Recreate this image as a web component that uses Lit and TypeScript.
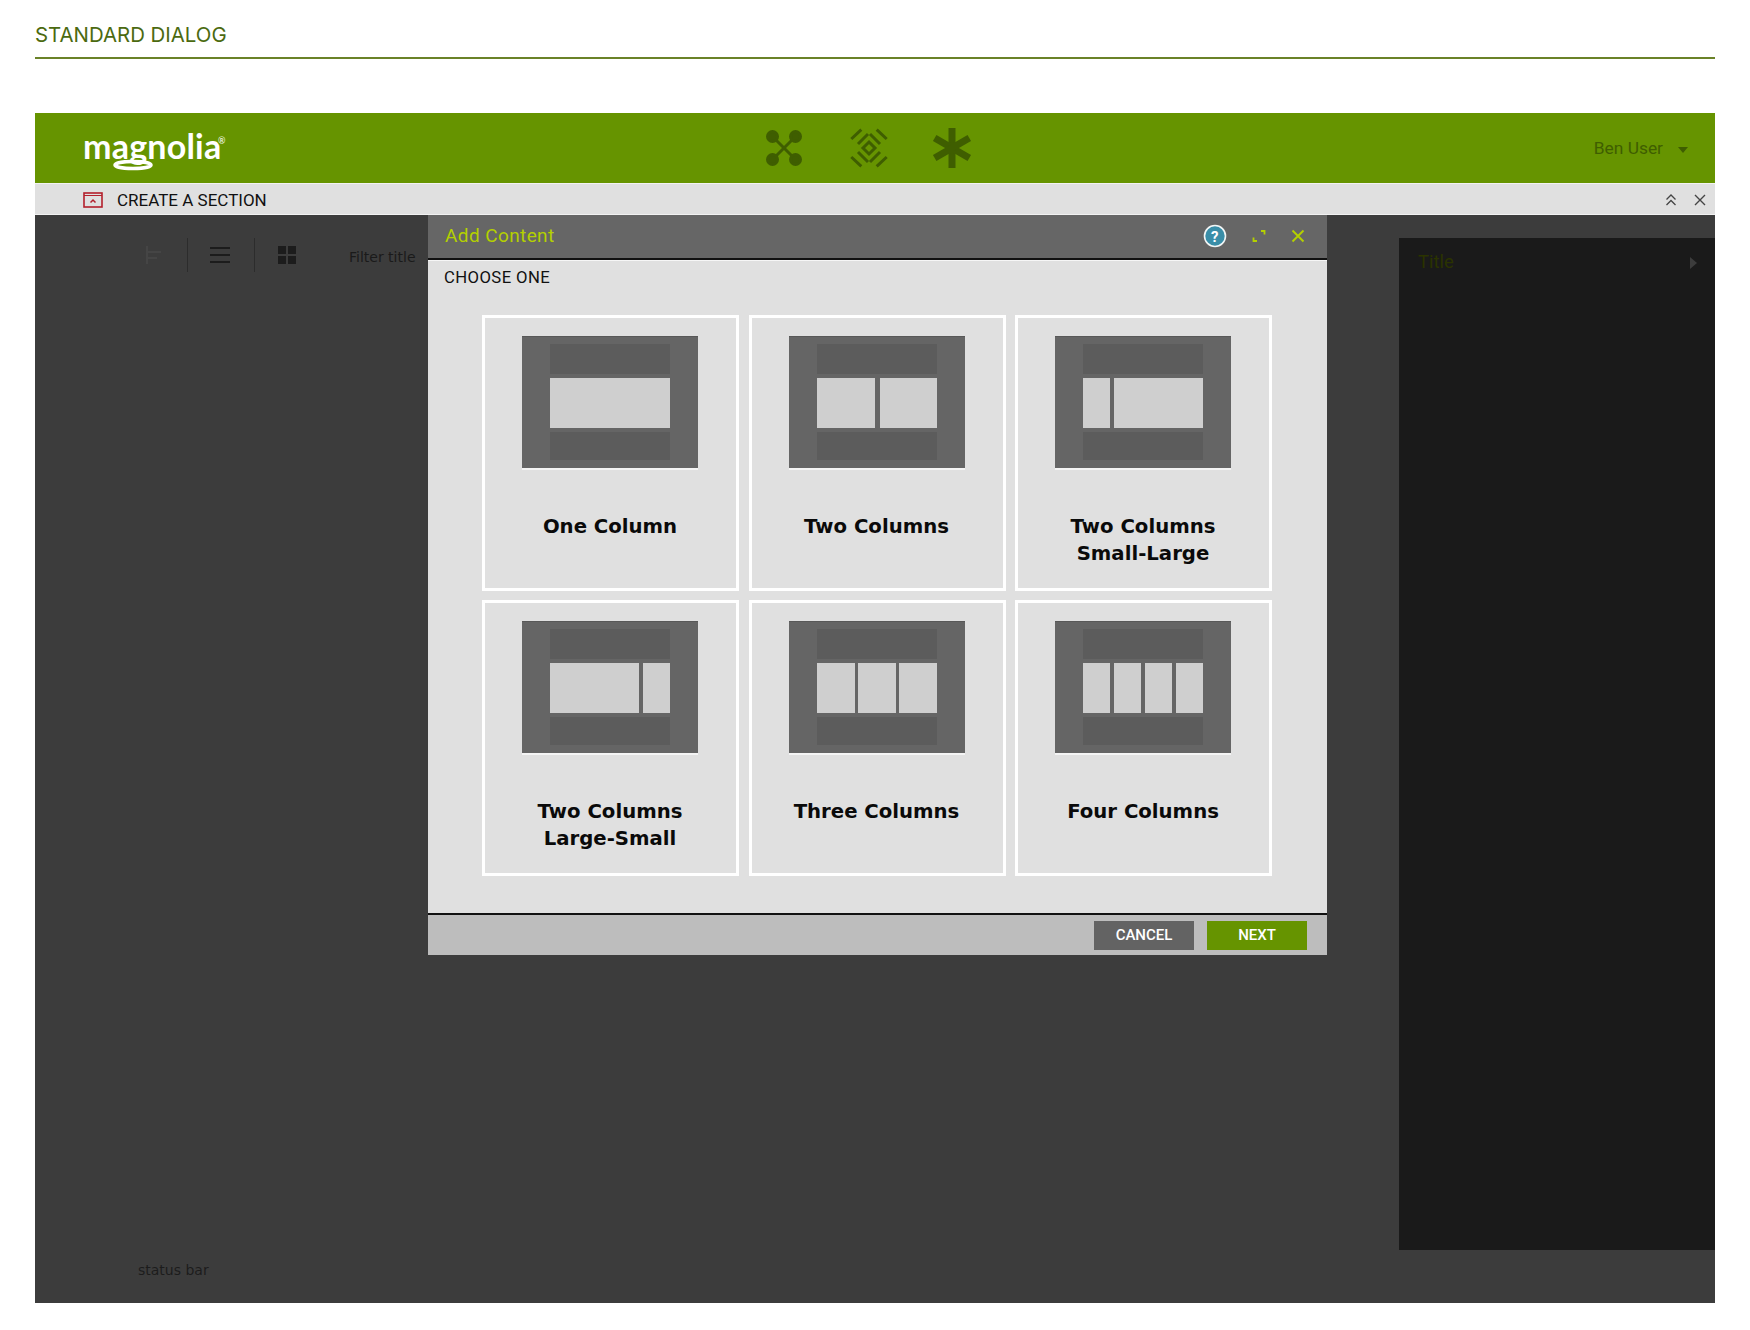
import { LitElement, html, css, svg } from 'lit';
import { customElement } from 'lit/decorators.js';

interface Layout {
  label: string[];
  blocks: number[];
}

const LAYOUTS: Layout[] = [
  { label: ['One Column'], blocks: [120] },
  { label: ['Two Columns'], blocks: [58, 57] },
  { label: ['Two Columns', 'Small-Large'], blocks: [27, 89] },
  { label: ['Two Columns', 'Large-Small'], blocks: [89, 27] },
  { label: ['Three Columns'], blocks: [38, 38, 38] },
  { label: ['Four Columns'], blocks: [27, 27, 27, 27] },
];

const appsIcon = svg`
  <g fill="#3f5e00" stroke="#3f5e00" stroke-width="3">
    <line x1="6.5" y1="6.5" x2="29.5" y2="29.5" />
    <line x1="29.5" y1="6.5" x2="6.5" y2="29.5" />
    <circle cx="6.5" cy="6.5" r="5" />
    <circle cx="29.5" cy="6.5" r="5" />
    <circle cx="6.5" cy="29.5" r="5" />
    <circle cx="29.5" cy="29.5" r="5" />
  </g>`;

const pulseIcon = svg`
  <g fill="none" stroke="#3f5e00" stroke-width="3">
    <path d="M18 12 24 18 18 24 12 18Z" />
    <path d="M.3 9 10.300 -.3M7 14 17 4M35.700 9 25.700 -.3M29 14 19 4" />
    <path d="M.3 27 10.300 36.300M7 22 17 32M35.700 27 25.700 36.300M29 22 19 32" />
  </g>`;

const asteriskIcon = svg`
  <g stroke="#3f5e00" stroke-width="7">
    <line x1="20" y1="0" x2="20" y2="40" />
    <line x1="2.7" y1="10" x2="37.3" y2="30" />
    <line x1="2.7" y1="30" x2="37.3" y2="10" />
  </g>`;

@customElement('app-root')
export class AppRoot extends LitElement {
  static styles = css`
    :host {
      display: block;
      width: 1750px;
      height: 1330px;
      background: #fff;
      font-family: Roboto, 'Liberation Sans', sans-serif;
      overflow: hidden;
    }

    * {
      box-sizing: border-box;
    }

    svg {
      display: block;
    }

    .pulse {
      overflow: visible;
    }

    .page {
      padding: 0 35px;
    }

    .page-title {
      height: 59px;
      padding-top: 22px;
      border-bottom: 2px solid #6a8228;
      color: #4b6a10;
      font-family: Inter, sans-serif;
      font-size: 20.4px;
      line-height: 26px;
    }

    .frame {
      margin-top: 54px;
      height: 1190px;
      display: flex;
      flex-direction: column;
    }

    .topbar {
      height: 70px;
      background: #669400;
      display: grid;
      grid-template-columns: 1fr auto 1fr;
      align-items: center;
    }

    .logo {
      position: relative;
      margin-left: 48px;
      width: 150px;
      height: 50px;
      color: #fff;
      font-family: Lato, sans-serif;
      font-weight: 700;
      font-size: 34px;
      line-height: 46px;
      letter-spacing: 0.2px;
    }

    .logo sup {
      position: absolute;
      left: 135px;
      top: 13px;
      color: #dfe8c8;
      font-size: 9px;
      line-height: 9px;
    }

    .logo svg {
      position: absolute;
      left: 30px;
      top: 34px;
    }

    .apps {
      display: flex;
      align-items: center;
      margin-right: 12px;
    }

    .apps svg + svg {
      margin-left: 49px;
    }

    .apps svg.star {
      margin-left: 45px;
    }

    .user {
      justify-self: end;
      display: flex;
      align-items: center;
      margin-right: 27px;
      color: #3f5e00;
      font-size: 17.4px;
    }

    .caret {
      margin-left: 15px;
      margin-top: 3px;
      width: 0;
      height: 0;
      border: 5px solid transparent;
      border-top: 6px solid #3f5e00;
      border-bottom: 0;
    }

    .subbar {
      height: 32px;
      background: #e0e0e0;
      border-top: 1px solid #f2f2f2;
      border-bottom: 1px solid #f2f2f2;
      display: flex;
      align-items: center;
      padding: 2px 9px 0 48px;
      color: #111;
      font-size: 17px;
    }

    .subbar-title {
      margin-left: 14px;
      flex: 1;
    }

    .subbar-actions {
      display: flex;
      align-items: center;
      gap: 17px;
    }

    .workspace {
      position: relative;
      flex: 1;
      background: #3c3c3c;
      display: flex;
      flex-direction: column;
    }

    .panes {
      flex: 1;
      display: flex;
    }

    .main {
      flex: 1;
    }

    .toolbar {
      display: flex;
      align-items: center;
      height: 34px;
      margin-top: 23px;
      padding-left: 104px;
      color: #1a1a1a;
      font-family: 'DejaVu Sans', sans-serif;
      font-size: 14px;
    }

    .toolbar .sep {
      width: 1px;
      height: 34px;
      background: #2c2c2c;
    }

    .toolbar .tool {
      width: 66px;
      display: flex;
      justify-content: center;
      padding-right: 2px;
    }

    .toolbar .tree {
      width: 48px;
      display: flex;
      justify-content: center;
      padding-right: 24px;
    }

    .toolbar .filter {
      margin-left: 28px;
      margin-top: 4px;
    }

    .aside {
      width: 316px;
      margin-top: 23px;
      background: #1a1a1a;
      display: flex;
      justify-content: space-between;
      padding: 12px 18px 0 19px;
      color: #2a3300;
      font-size: 18.500px;
      line-height: 24px;
    }

    .aside i {
      margin-top: 7px;
      width: 0;
      height: 0;
      border: 6px solid transparent;
      border-left: 7px solid #3c3c3c;
      border-right: 0;
    }

    .status {
      height: 53px;
      padding: 11px 0 0 103px;
      color: #1c1c1c;
      font-family: 'DejaVu Sans', sans-serif;
      font-size: 14px;
      line-height: 18px;
    }

    .dialog {
      position: absolute;
      left: 393px;
      top: 0;
      width: 899px;
      height: 740px;
      display: flex;
      flex-direction: column;
    }

    .dialog-head {
      height: 45px;
      background: #666;
      border-bottom: 2px solid #111;
      display: flex;
      align-items: center;
      padding: 0 22px 2px 17px;
      color: #b4d000;
      font-size: 19px;
      letter-spacing: 0.4px;
    }

    .dialog-title {
      flex: 1;
    }

    .dialog-actions {
      display: flex;
      align-items: center;
    }

    .dialog-actions svg + svg {
      margin-left: 25px;
    }

    .dialog-body {
      flex: 1;
      background: #e0e0e0;
      border-top: 1px solid #f6f6f6;
      padding: 0 0 0 54px;
    }

    .choose {
      margin-left: -38px;
      height: 33px;
      line-height: 33px;
      color: #111;
      font-size: 16.700px;
      letter-spacing: 0.4px;
    }

    .grid {
      margin-top: 21px;
      display: grid;
      grid-template-columns: repeat(3, 257px);
      grid-auto-rows: 276px;
      column-gap: 9.500px;
      row-gap: 9px;
    }

    .card {
      border: 3px solid #fff;
      padding: 18px 1px 0 0;
      display: flex;
      flex-direction: column;
      align-items: center;
    }

    .thumb {
      width: 176px;
      height: 134px;
      background: #656565;
      border-top: 1px solid #585858;
      border-bottom: 2px solid #f4f4f4;
      padding: 7px 28px 8px;
      display: flex;
      flex-direction: column;
      gap: 4px;
    }

    .band {
      background: #5c5c5c;
    }

    .band.top {
      height: 30px;
    }

    .band.bottom {
      height: 28px;
    }

    .blocks {
      height: 50px;
      display: flex;
      justify-content: space-between;
    }

    .blocks span {
      background: #cfcfcf;
    }

    .label {
      margin-top: 43px;
      color: #0a0a0a;
      font-family: 'DejaVu Sans', sans-serif;
      font-weight: 700;
      font-size: 19.700px;
      line-height: 27px;
      text-align: center;
    }

    .dialog-foot {
      height: 42px;
      background: #bdbdbd;
      border-top: 2px solid #111;
      display: flex;
      align-items: center;
      justify-content: flex-end;
      gap: 13px;
      padding: 0 20px 0 0;
    }

    .btn {
      width: 100px;
      height: 29px;
      color: #fff;
      font-size: 15px;
      font-weight: 500;
      line-height: 29px;
      text-align: center;
    }

    .btn.cancel {
      background: #636363;
    }

    .btn.next {
      background: #669400;
    }
  `;

  private renderCard(layout: Layout) {
    return html`
      <div class="card">
        <div class="thumb">
          <div class="band top"></div>
          <div class="blocks">
            ${layout.blocks.map((w) => html`<span style="width:${w}px"></span>`)}
          </div>
          <div class="band bottom"></div>
        </div>
        <div class="label">${layout.label.map((line) => html`<div>${line}</div>`)}</div>
      </div>
    `;
  }

  render() {
    return html`
      <div class="page">
        <div class="page-title">STANDARD DIALOG</div>
        <div class="frame">
          <header class="topbar">
            <div class="logo">
              magnolia<sup>®</sup>
              <svg width="44" height="16" viewBox="0 0 44 16">
                <ellipse cx="20" cy="8" rx="18" ry="3.500" fill="none" stroke="#fff" stroke-width="3.500" />
              </svg>
            </div>
            <div class="apps">
              <svg width="36" height="36" viewBox="0 0 36 36">${appsIcon}</svg>
              <svg class="pulse" width="36" height="36" viewBox="0 0 36 36">${pulseIcon}</svg>
              <svg class="star" width="40" height="40" viewBox="0 0 40 40">${asteriskIcon}</svg>
            </div>
            <div class="user">Ben User<span class="caret"></span></div>
          </header>
          <div class="subbar">
            <svg width="20" height="16" viewBox="0 0 20 16" fill="none" stroke="#b3202c">
              <rect x="1" y="1" width="18" height="14" stroke-width="1.6" />
              <line x1="1" y1="3.5" x2="19" y2="3.5" />
              <path d="M7.5 10.5 10 8l2.500 2.500" stroke-width="1.500" />
            </svg>
            <span class="subbar-title">CREATE A SECTION</span>
            <div class="subbar-actions">
              <svg width="12" height="14" viewBox="0 0 12 14" fill="none" stroke="#444" stroke-width="1.300">
                <path d="M1.500 6.500 6 2l4.500 4.500M1.500 12 6 7.500l4.500 4.500" />
              </svg>
              <svg width="12" height="12" viewBox="0 0 12 12" fill="none" stroke="#444" stroke-width="1.400">
                <path d="M1 1l10 10M11 1 1 11" />
              </svg>
            </div>
          </div>
          <div class="workspace">
            <div class="panes">
              <div class="main">
                <div class="toolbar">
                  <span class="tree">
                    <svg width="24" height="24" viewBox="0 0 24 24" fill="none" stroke="#454545" stroke-width="2">
                      <path d="M8 3v18M8 9h14M8 15h10" />
                    </svg>
                  </span>
                  <span class="sep"></span>
                  <span class="tool">
                    <svg width="20" height="16" viewBox="0 0 20 16" fill="#1c1c1c">
                      <rect y="0" width="20" height="2" />
                      <rect y="7" width="20" height="2" />
                      <rect y="14" width="20" height="2" />
                    </svg>
                  </span>
                  <span class="sep"></span>
                  <span class="tool">
                    <svg width="18" height="18" viewBox="0 0 18 18" fill="#1c1c1c">
                      <rect width="8" height="8" />
                      <rect x="10" width="8" height="8" />
                      <rect y="10" width="8" height="8" />
                      <rect x="10" y="10" width="8" height="8" />
                    </svg>
                  </span>
                  <span class="filter">Filter title</span>
                </div>
              </div>
              <aside class="aside">Title<i></i></aside>
            </div>
            <div class="status">status bar</div>

            <section class="dialog">
              <div class="dialog-head">
                <span class="dialog-title">Add Content</span>
                <div class="dialog-actions">
                  <svg width="24" height="24" viewBox="0 0 24 24">
                    <circle cx="12" cy="12" r="10.500" fill="#3a8ea8" stroke="#f2f6f6" stroke-width="1.600" />
                    <text x="12" y="17.500" text-anchor="middle" fill="#fff" font-family="Roboto, sans-serif" font-weight="700" font-size="15">?</text>
                  </svg>
                  <svg width="14" height="14" viewBox="0 0 14 14" fill="none" stroke="#b4d000" stroke-width="1.800">
                    <path d="M9 2h3.500v3.500M5 12H1.500V8.500" />
                  </svg>
                  <svg width="14" height="14" viewBox="0 0 14 14" fill="none" stroke="#b4d000" stroke-width="1.900">
                    <path d="M1.500 1.500l11 11M12.500 1.500l-11 11" />
                  </svg>
                </div>
              </div>
              <div class="dialog-body">
                <div class="choose">CHOOSE ONE</div>
                <div class="grid">${LAYOUTS.map((l) => this.renderCard(l))}</div>
              </div>
              <div class="dialog-foot">
                <div class="btn cancel">CANCEL</div>
                <div class="btn next">NEXT</div>
              </div>
            </section>
          </div>
        </div>
      </div>
    `;
  }
}
